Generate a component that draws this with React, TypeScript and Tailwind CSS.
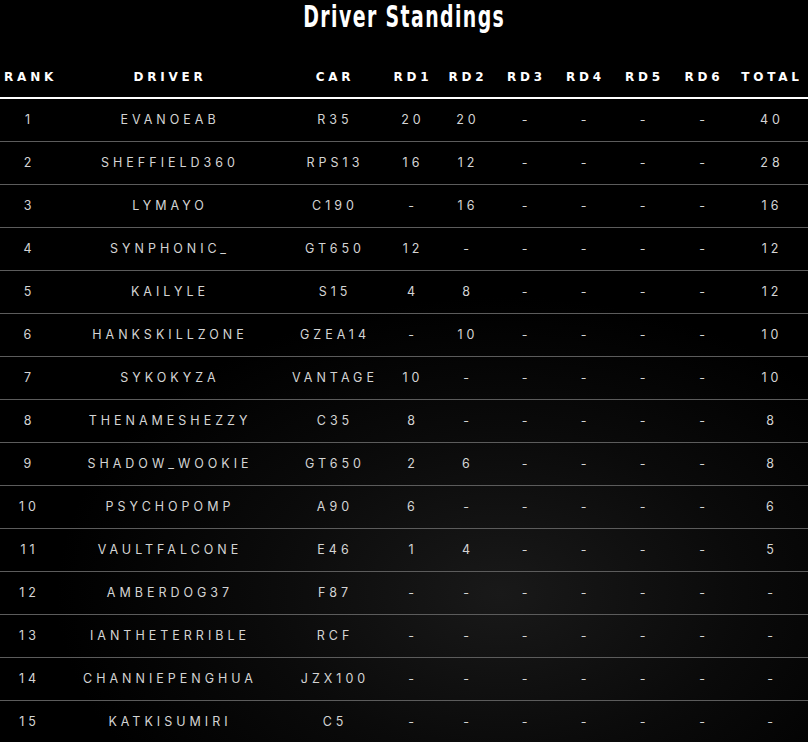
const columns = ['RANK', 'DRIVER', 'CAR', 'RD1', 'RD2', 'RD3', 'RD4', 'RD5', 'RD6', 'TOTAL']

const standings: string[][] = [
  ['1', 'EVANOEAB', 'R35', '20', '20', '-', '-', '-', '-', '40'],
  ['2', 'SHEFFIELD360', 'RPS13', '16', '12', '-', '-', '-', '-', '28'],
  ['3', 'LYMAYO', 'C190', '-', '16', '-', '-', '-', '-', '16'],
  ['4', 'SYNPHONIC_', 'GT650', '12', '-', '-', '-', '-', '-', '12'],
  ['5', 'KAILYLE', 'S15', '4', '8', '-', '-', '-', '-', '12'],
  ['6', 'HANKSKILLZONE', 'GZEA14', '-', '10', '-', '-', '-', '-', '10'],
  ['7', 'SYKOKYZA', 'VANTAGE', '10', '-', '-', '-', '-', '-', '10'],
  ['8', 'THENAMESHEZZY', 'C35', '8', '-', '-', '-', '-', '-', '8'],
  ['9', 'SHADOW_WOOKIE', 'GT650', '2', '6', '-', '-', '-', '-', '8'],
  ['10', 'PSYCHOPOMP', 'A90', '6', '-', '-', '-', '-', '-', '6'],
  ['11', 'VAULTFALCONE', 'E46', '1', '4', '-', '-', '-', '-', '5'],
  ['12', 'AMBERDOG37', 'F87', '-', '-', '-', '-', '-', '-', '-'],
  ['13', 'IANTHETERRIBLE', 'RCF', '-', '-', '-', '-', '-', '-', '-'],
  ['14', 'CHANNIEPENGHUA', 'JZX100', '-', '-', '-', '-', '-', '-', '-'],
  ['15', 'KATKISUMIRI', 'C5', '-', '-', '-', '-', '-', '-', '-'],
]

const grid = 'grid grid-cols-[55px_226px_104px_52px_58px_59px_59px_59px_60px_76px]'

export default function App() {
  return (
    <div className="w-[808px] h-[742px] overflow-hidden bg-black bg-[radial-gradient(ellipse_55%_40%_at_62%_80%,#191919_0%,#0a0a0a_55%,#000_100%)] font-['Inter','Liberation_Sans',sans-serif]">
      <div className="h-[35px] flex justify-center">
        <h1 className="inline-block whitespace-nowrap origin-top scale-x-[0.7] text-[30px] leading-[34px] font-bold tracking-[2px] text-white font-stretch-condensed font-['DejaVu_Sans','Liberation_Sans',sans-serif]">
          Driver Standings
        </h1>
      </div>

      <div className={`${grid} mt-[22px] h-[42px] items-center border-b-2 border-white`}>
        {columns.map((c) => (
          <div
            key={c}
            className="text-center text-[12px] font-black tracking-[3.8px] pl-[4px] text-white font-['DejaVu_Sans','Liberation_Sans',sans-serif]"
          >
            {c}
          </div>
        ))}
      </div>

      {standings.map((row, i) => (
        <div
          key={row[0]}
          className={`${grid} h-[43px] items-center ${i < standings.length - 1 ? 'border-b border-[#5c5c5c]' : ''}`}
        >
          {row.map((cell, j) => (
            <div
              key={j}
              className="text-center text-[12.5px] font-normal tracking-[4px] pl-[4px] text-[#d4d4d4]"
            >
              {cell}
            </div>
          ))}
        </div>
      ))}
    </div>
  )
}
